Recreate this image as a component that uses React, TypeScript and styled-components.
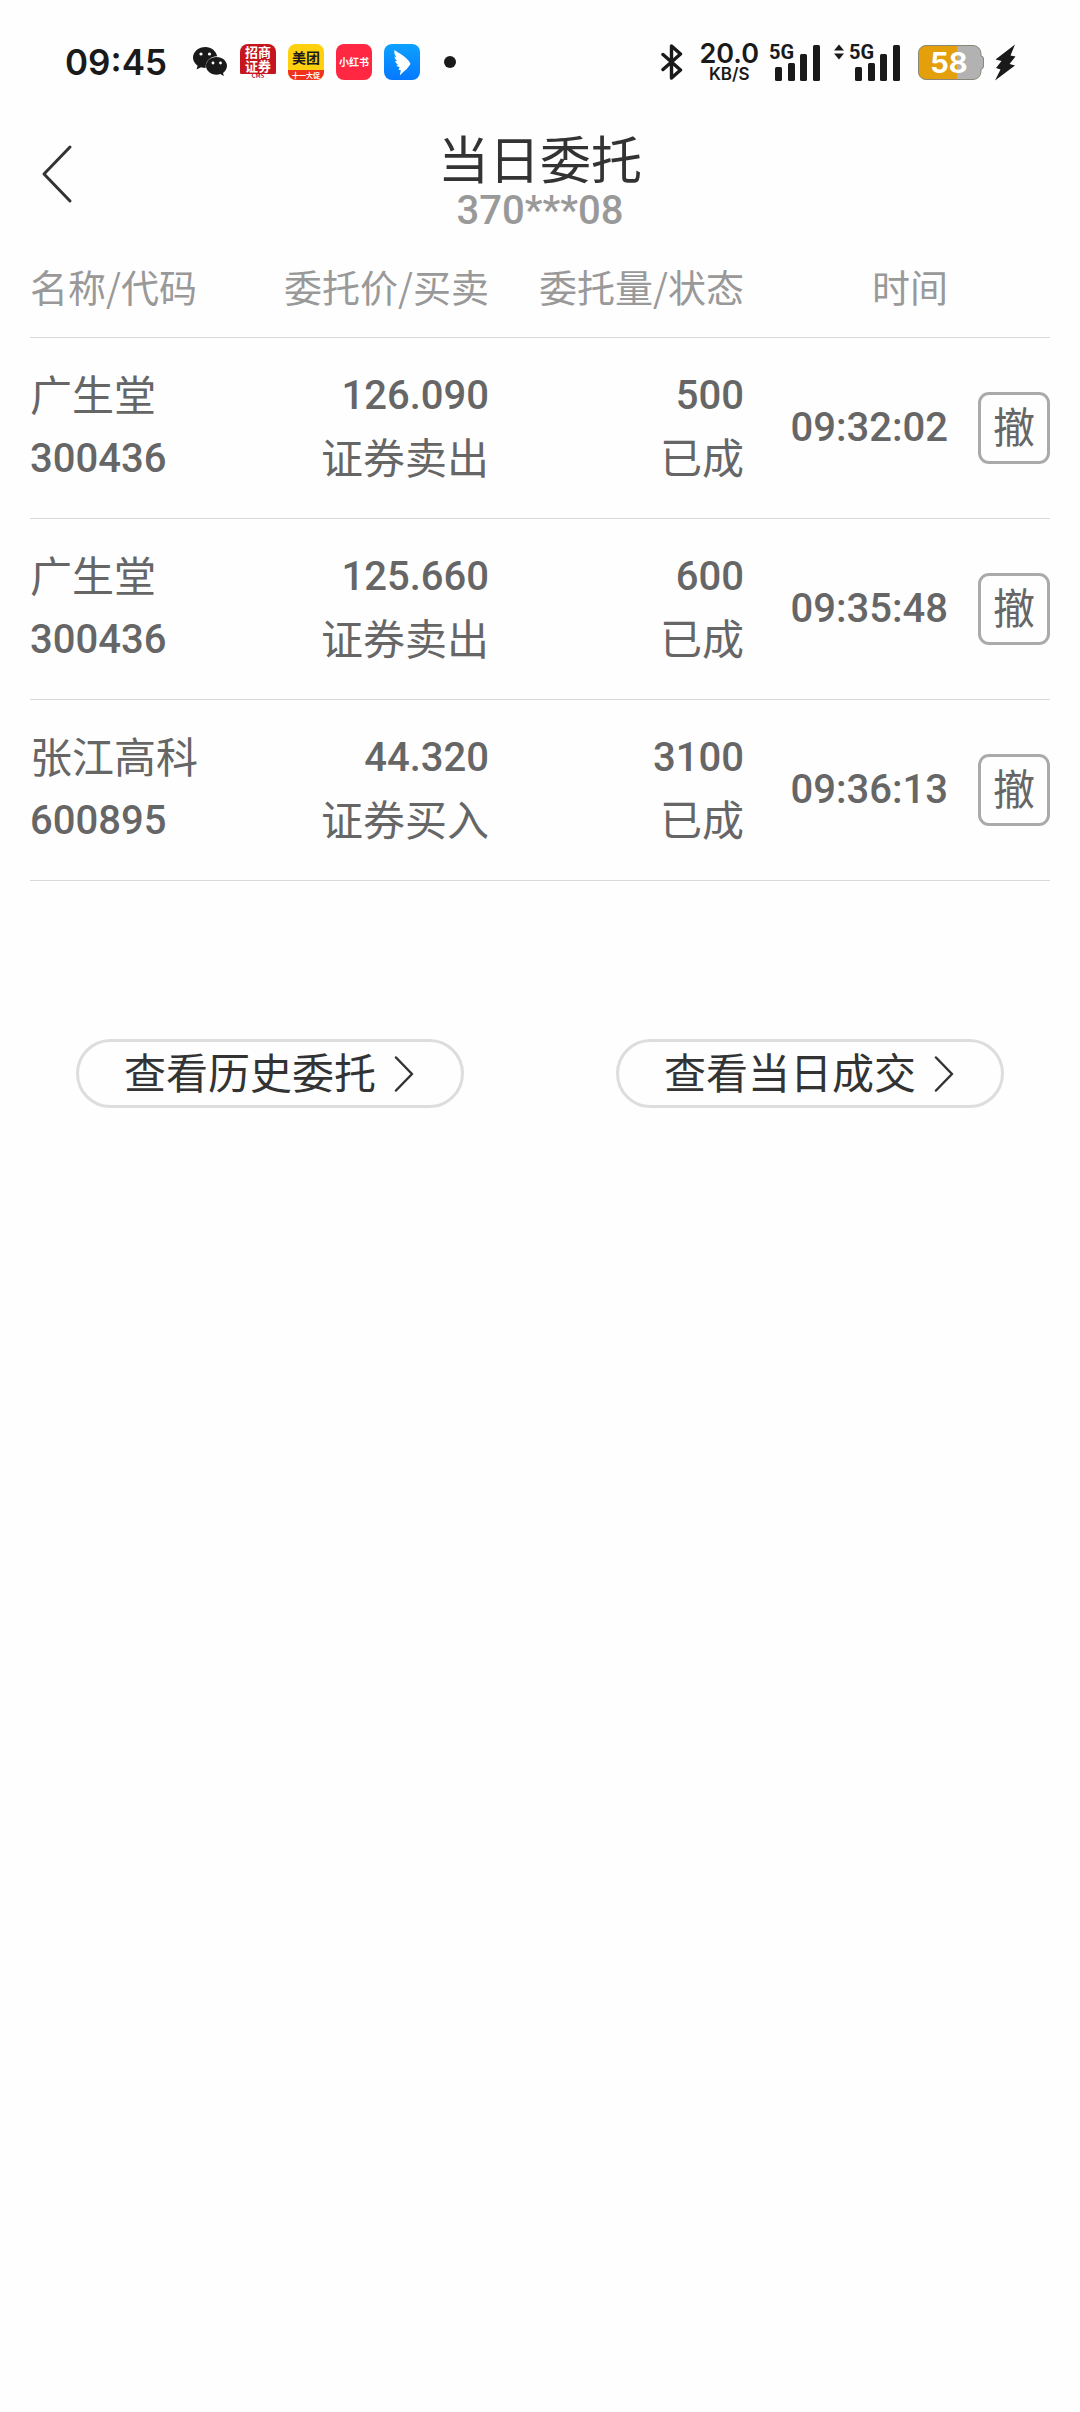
import React from "react";
import styled, { createGlobalStyle } from "styled-components";

const cjk = `"Noto Sans CJK SC", sans-serif`;
const digits = `Roboto, "Noto Sans CJK SC", sans-serif`;
const system = `Inter, "Noto Sans CJK SC", sans-serif`;
const ink = "#1a1a1a";

const GlobalStyle = createGlobalStyle`
  *, *::before, *::after { box-sizing: border-box; }
  body { margin: 0; background: #fefefe; font-family: ${cjk}; color: #333; }
`;

const Screen = styled.div`
  min-height: 100vh;
`;

/* ---------- status bar ---------- */

const StatusBar = styled.div`
  display: flex;
  align-items: center;
  justify-content: space-between;
  height: 116px;
  padding: 8px 64px 0 65px;
  color: ${ink};
  font-family: ${system};
`;

const StatusGroup = styled.div<{ $gap: number }>`
  display: flex;
  align-items: center;
  gap: ${(p) => p.$gap}px;
`;

const Clock = styled.time`
  margin-right: 14px;
  font-size: 35px;
  line-height: 44px;
  font-weight: 600;
`;

const AppIcon = styled.span<{ $bg: string }>`
  display: flex;
  flex-direction: column;
  align-items: center;
  justify-content: center;
  width: 36px;
  height: 36px;
  border-radius: 8px;
  background: ${(p) => p.$bg};
`;

const AppText = styled.span<{ $size: number; $line: number; $color: string; $bg?: string }>`
  width: 100%;
  border-radius: 0 0 8px 8px;
  text-align: center;
  white-space: nowrap;
  font-family: ${cjk};
  font-weight: 700;
  font-size: ${(p) => p.$size}px;
  line-height: ${(p) => p.$line}px;
  color: ${(p) => p.$color};
  background: ${(p) => p.$bg ?? "transparent"};
`;

const Dot = styled.span`
  width: 12px;
  height: 12px;
  margin-left: 12px;
  border-radius: 50%;
  background: ${ink};
`;

const Speed = styled.span`
  display: flex;
  flex-direction: column;
  align-items: center;
  margin: 0 10px 0 16px;
  font-weight: 600;
  font-size: 27px;
  line-height: 24px;
`;

const SpeedUnit = styled.span`
  font-size: 17px;
  line-height: 16px;
`;

const SignalBox = styled.span`
  position: relative;
  display: flex;
`;

const Network = styled.span<{ $left: number }>`
  position: absolute;
  top: 0;
  left: ${(p) => p.$left}px;
  font-family: ${digits};
  font-weight: 700;
  font-size: 20px;
  line-height: 16px;
`;

const Battery = styled.span`
  position: relative;
  display: flex;
  margin: 0 11px 0 18px;
`;

const BatteryLevel = styled.span`
  position: absolute;
  inset: 0 4px 0 0;
  text-align: center;
  color: #fff;
  font-weight: 700;
  font-size: 29px;
  line-height: 35px;
`;

/* ---------- page header ---------- */

const Header = styled.header`
  display: grid;
  grid-template-columns: 120px 1fr 120px;
  align-items: center;
  padding: 16px 0 6px;
`;

const BackButton = styled.button`
  display: flex;
  align-items: center;
  justify-content: flex-start;
  height: 72px;
  margin-bottom: 18px;
  padding: 0 0 0 41px;
  border: 0;
  background: none;
  color: #333;
`;

const Titles = styled.div`
  text-align: center;
`;

const Title = styled.h1`
  margin: 0;
  padding-bottom: 6px;
  font-size: 51px;
  line-height: 50px;
  font-weight: 400;
`;

const Account = styled.p`
  margin: 0;
  font-family: ${digits};
  font-size: 40px;
  line-height: 46px;
  font-weight: 500;
  color: #999;
`;

/* ---------- orders ---------- */

const Orders = styled.main`
  padding: 0 30px;
`;

const Table = styled.table`
  width: 100%;
  table-layout: fixed;
  border-spacing: 0;
`;

const HeadCell = styled.th<{ $width: string; $align?: string }>`
  width: ${(p) => p.$width};
  height: 98px;
  padding: 0 0 5px;
  border-bottom: 1px solid #d9d9d9;
  text-align: ${(p) => p.$align ?? "right"};
  white-space: nowrap;
  font-size: 38px;
  line-height: 56px;
  font-weight: 400;
  color: #999;
`;

const Cell = styled.td<{ $align?: string }>`
  padding: 26px 0 28px;
  border-bottom: 1px solid #d9d9d9;
  text-align: ${(p) => p.$align ?? "right"};
  vertical-align: middle;
  white-space: nowrap;
  color: #666;
`;

const Label = styled.div`
  padding-bottom: 5px;
  font-size: 42px;
  line-height: 58px;
`;

const Figure = styled.div`
  font-family: ${digits};
  font-size: 40px;
  line-height: 63px;
  font-weight: 500;
`;

const ActionCell = styled(Cell)`
  padding: 28px 0;
`;

const CancelButton = styled.button`
  width: 72px;
  height: 72px;
  padding: 0 0 6px;
  border: 3px solid #aaa;
  border-radius: 11px;
  background: none;
  vertical-align: middle;
  font-family: ${cjk};
  font-size: 42px;
  line-height: 58px;
  color: #666;
`;

const Links = styled.nav`
  display: grid;
  grid-template-columns: 1fr 1fr;
  justify-items: center;
  margin-top: 158px;
`;

const PillLink = styled.a`
  display: flex;
  align-items: center;
  gap: 18px;
  height: 69px;
  padding: 0 47px 0 45px;
  border: 3px solid #ddd;
  border-radius: 35px;
  font-size: 42px;
  line-height: 58px;
  white-space: nowrap;
  text-decoration: none;
  color: #333;
`;

const PillText = styled.span`
  padding-bottom: 5px;
`;

/* ---------- drawings ---------- */

const WeChatIcon = () => (
  <svg width="35" height="30" viewBox="0 0 35 30" fill={ink} aria-hidden="true">
    <path d="M12.500 0C5.600 0 0 4.700 0 10.600c0 3.300 1.800 6.200 4.600 8.200L3.600 22.500l4.400-2.300c1.500.5 3 .7 4.700.7C12.300 14 17 9.500 24.200 9.200 23 3.800 18.200 0 12.500 0z" />
    <path d="M34 18.800c0-5-4.700-8.900-10.500-8.900S13 13.900 13 18.800s4.700 8.900 10.500 8.900c1.300 0 2.600-.2 3.700-.6l3.700 2-.9-3.200c2.400-1.600 4-4.200 4-7.100z" />
    <g fill="#fff">
      <circle cx="8" cy="7" r="1.600" />
      <circle cx="16.500" cy="7" r="1.600" />
      <circle cx="20" cy="16" r="1.400" />
      <circle cx="27.500" cy="16" r="1.400" />
    </g>
  </svg>
);

const WingIcon = () => (
  <svg width="36" height="36" viewBox="0 0 36 36" fill="#fff" aria-hidden="true">
    <path d="M10.500 6c2 2 5 3.200 8 5.200 3.200 2.200 5.600 4.300 7.500 7.500.5.800.4 1.400 0 2l-3.500 4.600-3 2.400-3.700 3.800 1-5.300-2.300-.4 1.200-2.600c-1.400-.2-2.600-1-3.300-2.200l2.200-.2c-1.900-.9-3-2.200-3.500-3.900l2.300.4c-1.700-1.400-2.700-2.900-3-4.700l2 .7C10.600 11 10 9 10.500 6z" />
  </svg>
);

const BluetoothIcon = () => (
  <svg width="22" height="36" viewBox="0 0 22 36" fill="none" stroke={ink} strokeWidth="3.400" strokeLinejoin="round" strokeLinecap="round" aria-hidden="true">
    <path d="M2 10.500l17.500 15.500-9 8V2l9 8L2 25.500" />
  </svg>
);

const SignalBars = ({ data }: { data?: boolean }) => {
  const x = data ? 21 : 6;
  const width = x + 45;
  return (
    <svg width={width} height="37" viewBox={`0 0 ${width} 37`} fill={ink} aria-hidden="true">
      {data && <path d="M0 6.500L5 .5l5 6zM0 9.500h10l-5 6z" />}
      <rect x={x} y="23" width="7" height="14" rx="1.500" />
      <rect x={x + 13} y="19" width="7" height="18" rx="1.500" />
      <rect x={x + 25} y="10" width="7" height="27" rx="1.500" />
      <rect x={x + 38} y="1" width="7" height="36" rx="1.500" />
    </svg>
  );
};

const BatteryShape = () => (
  <svg width="66" height="35" viewBox="0 0 66 35" aria-hidden="true">
    <path d="M8 .5h47a8 8 0 0 1 8 8v2.500q2.500 0 2.500 3v7q0 3-2.500 3v2.500a8 8 0 0 1-8 8H8a7.500 7.500 0 0 1-7.500-7.500V8A7.500 7.500 0 0 1 8 .5z" fill="#b2b2b2" />
    <path d="M39 .5H8A7.500 7.500 0 0 0 .5 8v19A7.500 7.500 0 0 0 8 34.500h31z" fill="#e4a00b" />
    <path d="M8 .5h47a8 8 0 0 1 8 8v2.500q2.500 0 2.500 3v7q0 3-2.500 3v2.500a8 8 0 0 1-8 8H8a7.500 7.500 0 0 1-7.500-7.500V8A7.500 7.500 0 0 1 8 .5z" fill="none" stroke="#8a8678" />
  </svg>
);

const BoltIcon = () => (
  <svg width="21" height="37" viewBox="0 0 21 37" fill={ink} aria-hidden="true">
    <path d="M20 .5L.5 15.500l6 1.500L1 24l4.500 1.500L0 36.500 20 21.500l-5.500-1.500 6-7.500-5-1z" />
  </svg>
);

const BackIcon = () => (
  <svg width="32" height="60" viewBox="0 0 32 60" fill="none" stroke="currentColor" strokeWidth="3" strokeLinecap="round" strokeLinejoin="round" aria-hidden="true">
    <path d="M29 3L3 30l26 27" />
  </svg>
);

const ForwardIcon = () => (
  <svg width="20" height="36" viewBox="0 0 20 36" fill="none" stroke="currentColor" strokeWidth="2.500" strokeLinecap="round" strokeLinejoin="round" aria-hidden="true">
    <path d="M2 1.500L18 18 2 34.500" />
  </svg>
);

/* ---------- data ---------- */

const orders = [
  { name: "广生堂", code: "300436", price: "126.090", side: "证券卖出", volume: "500", status: "已成", time: "09:32:02" },
  { name: "广生堂", code: "300436", price: "125.660", side: "证券卖出", volume: "600", status: "已成", time: "09:35:48" },
  { name: "张江高科", code: "600895", price: "44.320", side: "证券买入", volume: "3100", status: "已成", time: "09:36:13" },
];

export default function App() {
  return (
    <Screen>
      <GlobalStyle />
      <StatusBar>
        <StatusGroup $gap={12}>
          <Clock>09:45</Clock>
          <WeChatIcon />
          <AppIcon $bg="linear-gradient(#c4161c 0 30px, #fff 30px)">
            <AppText $size={13} $line={15} $color="#fff">招商</AppText>
            <AppText $size={13} $line={13} $color="#fff">证券</AppText>
            <AppText $size={6} $line={8} $color="#c4161c">CMS</AppText>
          </AppIcon>
          <AppIcon $bg="#ffd00d">
            <AppText $size={14} $line={26} $color="#1a1a1a">美团</AppText>
            <AppText $size={7} $line={10} $color="#fff" $bg="#f0321e">十一大促</AppText>
          </AppIcon>
          <AppIcon $bg="#ff2742">
            <AppText $size={10} $line={36} $color="#fff">小红书</AppText>
          </AppIcon>
          <AppIcon $bg="linear-gradient(#0da2ff, #0578ff)">
            <WingIcon />
          </AppIcon>
          <Dot />
        </StatusGroup>
        <StatusGroup $gap={0}>
          <BluetoothIcon />
          <Speed>
            20.0
            <SpeedUnit>KB/S</SpeedUnit>
          </Speed>
          <StatusGroup $gap={14}>
            <SignalBox>
              <Network $left={0}>5G</Network>
              <SignalBars />
            </SignalBox>
            <SignalBox>
              <Network $left={15}>5G</Network>
              <SignalBars data />
            </SignalBox>
          </StatusGroup>
          <Battery>
            <BatteryShape />
            <BatteryLevel>58</BatteryLevel>
          </Battery>
          <BoltIcon />
        </StatusGroup>
      </StatusBar>

      <Header>
        <BackButton type="button" aria-label="返回">
          <BackIcon />
        </BackButton>
        <Titles>
          <Title>当日委托</Title>
          <Account>370***08</Account>
        </Titles>
      </Header>

      <Orders>
        <Table>
          <thead>
            <tr>
              <HeadCell $width="20%" $align="left">名称/代码</HeadCell>
              <HeadCell $width="25%">委托价/买卖</HeadCell>
              <HeadCell $width="25%">委托量/状态</HeadCell>
              <HeadCell $width="20%">时间</HeadCell>
              <HeadCell $width="10%" aria-label="操作" />
            </tr>
          </thead>
          <tbody>
            {orders.map((o) => (
              <tr key={o.time}>
                <Cell $align="left">
                  <Label>{o.name}</Label>
                  <Figure>{o.code}</Figure>
                </Cell>
                <Cell>
                  <Figure>{o.price}</Figure>
                  <Label>{o.side}</Label>
                </Cell>
                <Cell>
                  <Figure>{o.volume}</Figure>
                  <Label>{o.status}</Label>
                </Cell>
                <Cell>
                  <Figure>{o.time}</Figure>
                </Cell>
                <ActionCell>
                  <CancelButton type="button">撤</CancelButton>
                </ActionCell>
              </tr>
            ))}
          </tbody>
        </Table>
      </Orders>

      <Links>
        <PillLink href="#history">
          <PillText>查看历史委托</PillText>
          <ForwardIcon />
        </PillLink>
        <PillLink href="#deals">
          <PillText>查看当日成交</PillText>
          <ForwardIcon />
        </PillLink>
      </Links>
    </Screen>
  );
}
